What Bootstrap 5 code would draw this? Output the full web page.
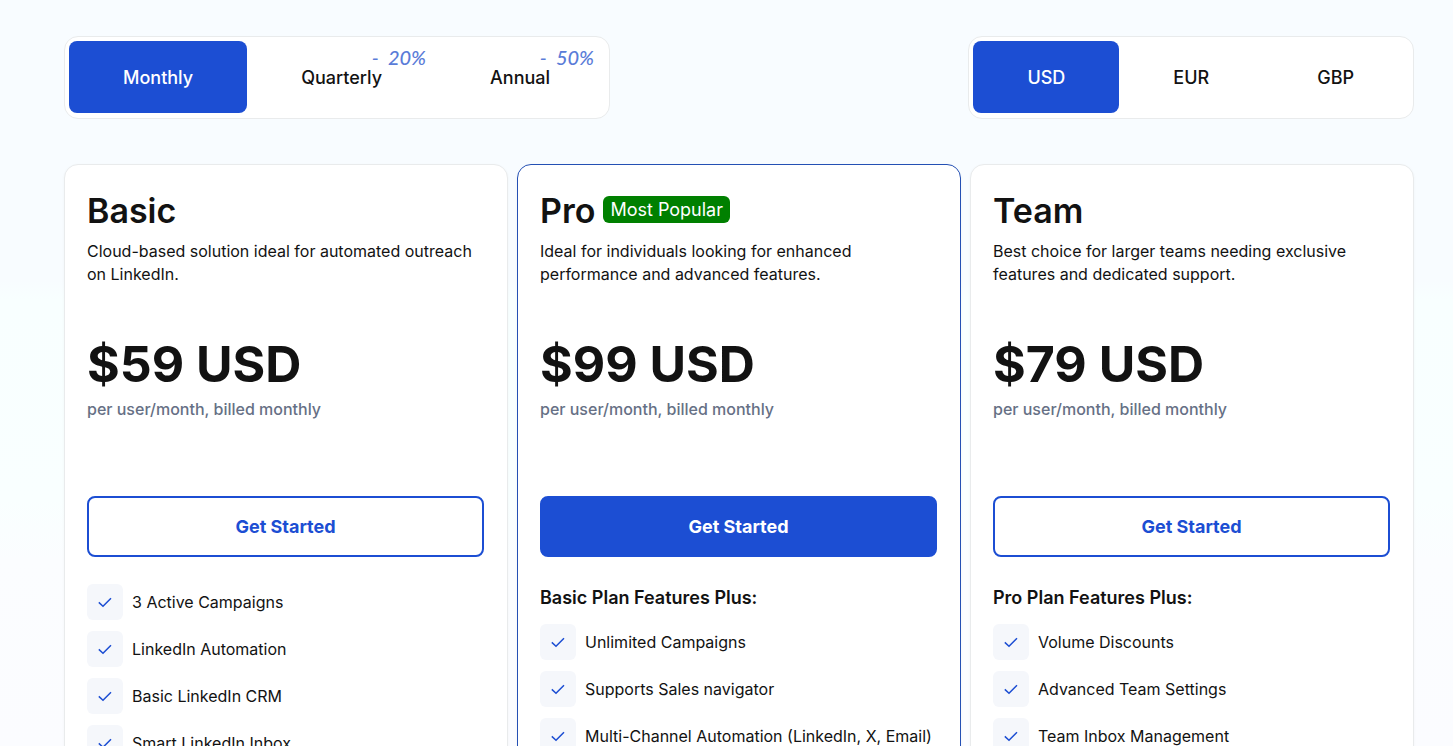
<!DOCTYPE html>
<html lang="en">
<head>
<meta charset="utf-8">
<meta name="viewport" content="width=device-width, initial-scale=1">
<title>Pricing</title>
<link href="https://cdn.jsdelivr.net/npm/bootstrap@5.3.0/dist/css/bootstrap.min.css" rel="stylesheet">
<style>
  :root { --brand: #1c4ed3; --ink: #121212; --line: #e9ebec; }
  body {
    font-family: Inter, "Liberation Sans", sans-serif;
    font-optical-sizing: none;
    color: var(--ink);
    background: #fbfcff linear-gradient(#f8fcff 0, #f8fcff 280px, #f8ffff 300px, #f9ffff 500px, #fbfdff 560px, #fbfcff 746px) no-repeat;
    height: 100vh;
    overflow: hidden;
  }
  .pricing { padding: 36px 39px 0 64px; }
  .switcher { background: #fff; border: 1px solid var(--line); border-radius: 14px; padding: 4px 5px 5px 4px; }
  .switch-btn {
    position: relative;
    padding: 23px 54px 22px;
    border: 0;
    border-radius: 8px;
    font-size: 18px;
    line-height: 27px;
    font-weight: 500;
    color: var(--ink);
    background: transparent;
  }
  .switch-btn.active { background: var(--brand); color: #fff; }
  .saving {
    position: absolute;
    top: 3px;
    right: 10px;
    font-family: Lato, sans-serif;
    font-style: italic;
    font-weight: 500;
    font-size: 20px;
    color: #5a7cd8;
    white-space: pre;
  }
  .plans { display: grid; grid-template-columns: repeat(3, minmax(0, 1fr)); gap: 9px; margin-top: 45px; }
  .plan { background: #fff; border: 1px solid var(--line); border-radius: 14px; padding: 24px 23px 24px 22px; box-shadow: 0 1px 3px rgba(16, 40, 60, .04); }
  .plan-featured { border-color: #2450b4; }
  .plan-name { font-size: 34px; line-height: 43px; font-weight: 600; }
  .tag { font-size: 18px; line-height: 27px; font-weight: 400; color: #fff; background: #008000; border-radius: 6px; padding: 0 7px; margin-bottom: 2px; }
  .plan-text { font-size: 16px; line-height: 23px; min-height: 46px; }
  .plan-price { font-size: 50px; line-height: 60px; font-weight: 700; margin-top: 48px; }
  .plan-terms { font-size: 16px; line-height: 24px; font-weight: 500; color: #667085; margin: 3px 0 75px; }
  .cta { border: 2px solid var(--brand); border-radius: 8px; padding: 15px; font-size: 18px; line-height: 27px; font-weight: 700; color: var(--brand); background: #fff; }
  .cta-solid { color: #fff; background: var(--brand); }
  .after-cta { margin-top: 27px; }
  .plus { font-size: 18px; line-height: 27px; font-weight: 600; margin-bottom: 13px; }
  .features { display: grid; gap: 11px; }
  .features li { font-size: 16px; line-height: 23px; }
  .tick { flex: none; width: 36px; height: 36px; border-radius: 6px; background: #f5f7fb; margin-right: 9px; }
  .tick svg { width: 16px; height: 16px; fill: none; stroke: var(--brand); stroke-width: 1.5; }
</style>
</head>
<body>
<svg class="d-none"><symbol id="check" viewBox="0 0 16 16"><path d="M1.8 8.4 6 12.3 14 4.2"/></symbol></svg>
<main class="pricing">
  <div class="d-flex justify-content-between">
    <div class="switcher d-flex" role="group" aria-label="Billing period">
      <button type="button" class="switch-btn active">Monthly</button>
      <button type="button" class="switch-btn">Quarterly<span class="saving">-  20%</span></button>
      <button type="button" class="switch-btn">Annual<span class="saving">-  50%</span></button>
    </div>
    <div class="switcher d-flex" role="group" aria-label="Currency">
      <button type="button" class="switch-btn active">USD</button>
      <button type="button" class="switch-btn">EUR</button>
      <button type="button" class="switch-btn">GBP</button>
    </div>
  </div>

  <div class="plans">
    <section class="plan">
      <h2 class="plan-name mb-2">Basic</h2>
      <p class="plan-text mb-0">Cloud-based solution ideal for automated outreach on LinkedIn.</p>
      <div class="plan-price">$59 USD</div>
      <p class="plan-terms">per user/month, billed monthly</p>
      <button type="button" class="cta w-100">Get Started</button>
      <ul class="features after-cta list-unstyled">
        <li class="d-flex align-items-center"><span class="tick d-flex align-items-center justify-content-center"><svg><use href="#check"/></svg></span>3 Active Campaigns</li>
        <li class="d-flex align-items-center"><span class="tick d-flex align-items-center justify-content-center"><svg><use href="#check"/></svg></span>LinkedIn Automation</li>
        <li class="d-flex align-items-center"><span class="tick d-flex align-items-center justify-content-center"><svg><use href="#check"/></svg></span>Basic LinkedIn CRM</li>
        <li class="d-flex align-items-center"><span class="tick d-flex align-items-center justify-content-center"><svg><use href="#check"/></svg></span>Smart LinkedIn Inbox</li>
      </ul>
    </section>

    <section class="plan plan-featured">
      <div class="d-flex align-items-center mb-2"><h2 class="plan-name mb-0 me-2">Pro</h2><span class="tag">Most Popular</span></div>
      <p class="plan-text mb-0">Ideal for individuals looking for enhanced performance and advanced features.</p>
      <div class="plan-price">$99 USD</div>
      <p class="plan-terms">per user/month, billed monthly</p>
      <button type="button" class="cta cta-solid w-100">Get Started</button>
      <h3 class="plus after-cta">Basic Plan Features Plus:</h3>
      <ul class="features list-unstyled">
        <li class="d-flex align-items-center"><span class="tick d-flex align-items-center justify-content-center"><svg><use href="#check"/></svg></span>Unlimited Campaigns</li>
        <li class="d-flex align-items-center"><span class="tick d-flex align-items-center justify-content-center"><svg><use href="#check"/></svg></span>Supports Sales navigator</li>
        <li class="d-flex align-items-center"><span class="tick d-flex align-items-center justify-content-center"><svg><use href="#check"/></svg></span>Multi-Channel Automation (LinkedIn, X, Email)</li>
      </ul>
    </section>

    <section class="plan">
      <h2 class="plan-name mb-2">Team</h2>
      <p class="plan-text mb-0">Best choice for larger teams needing exclusive features and dedicated support.</p>
      <div class="plan-price">$79 USD</div>
      <p class="plan-terms">per user/month, billed monthly</p>
      <button type="button" class="cta w-100">Get Started</button>
      <h3 class="plus after-cta">Pro Plan Features Plus:</h3>
      <ul class="features list-unstyled">
        <li class="d-flex align-items-center"><span class="tick d-flex align-items-center justify-content-center"><svg><use href="#check"/></svg></span>Volume Discounts</li>
        <li class="d-flex align-items-center"><span class="tick d-flex align-items-center justify-content-center"><svg><use href="#check"/></svg></span>Advanced Team Settings</li>
        <li class="d-flex align-items-center"><span class="tick d-flex align-items-center justify-content-center"><svg><use href="#check"/></svg></span>Team Inbox Management</li>
      </ul>
    </section>
  </div>
</main>
<script src="https://cdn.jsdelivr.net/npm/bootstrap@5.3.0/dist/js/bootstrap.bundle.min.js"></script>
</body>
</html>
